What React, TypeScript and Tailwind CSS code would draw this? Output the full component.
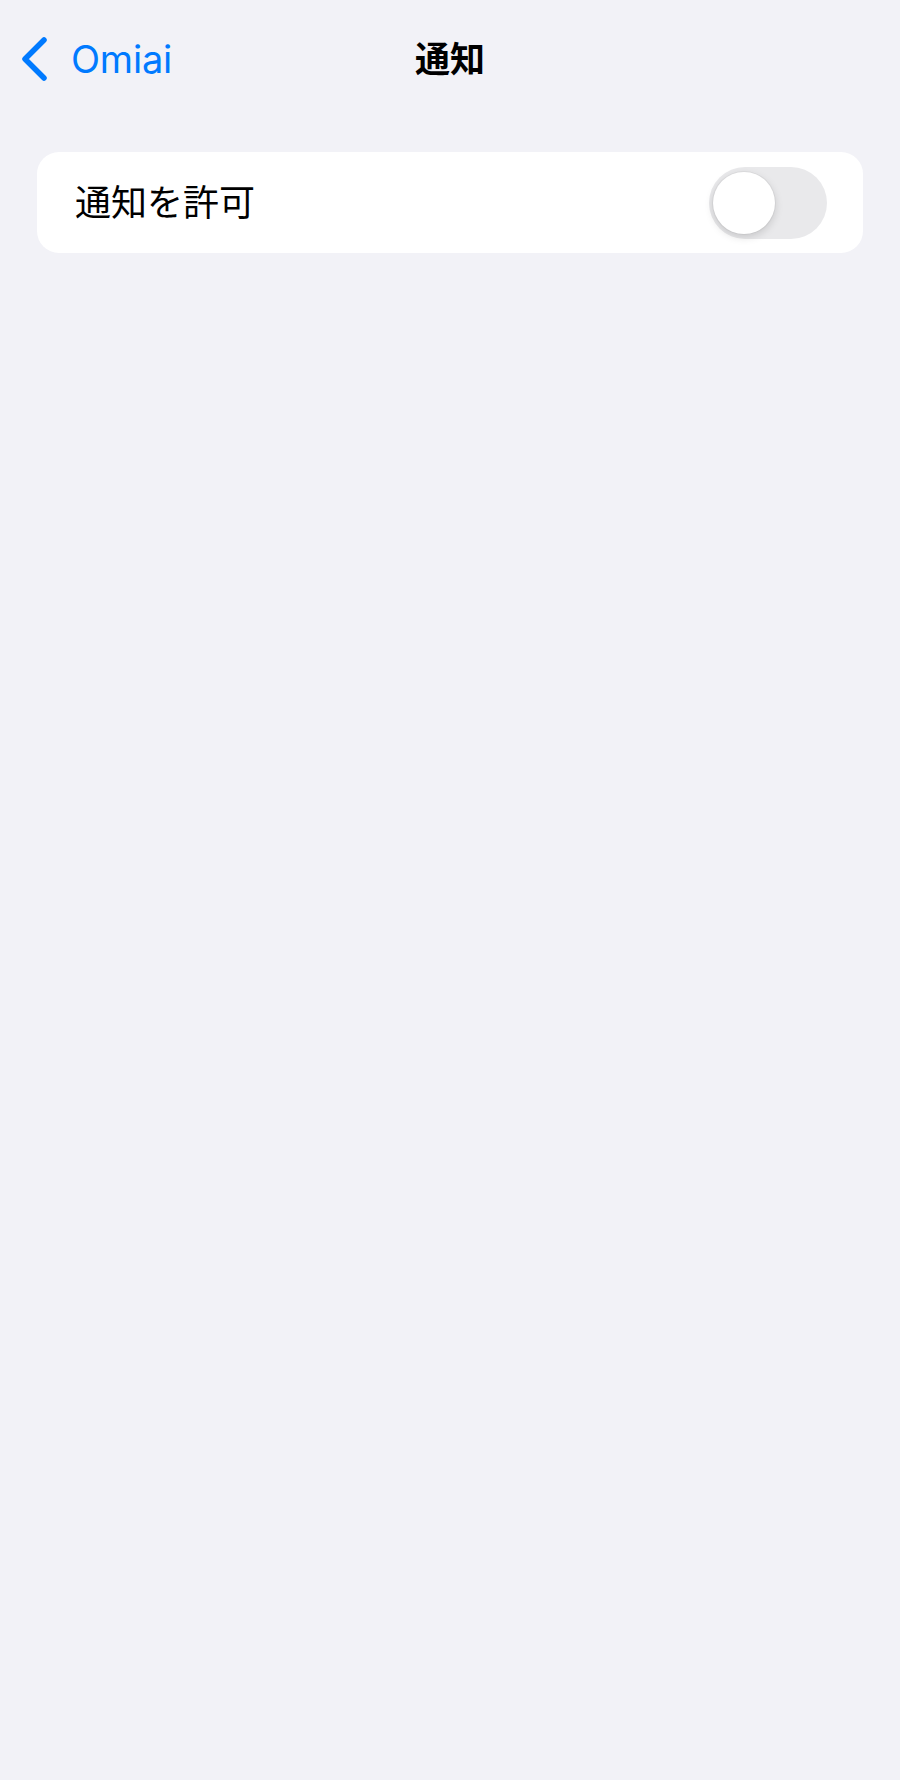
import { useState } from 'react'

function BackChevron() {
  return (
    <svg width="28" height="46" viewBox="0 0 28 46" fill="none">
      <path d="M24 4 L5 23 L24 42" stroke="#007aff" strokeWidth="5.5" strokeLinecap="round" strokeLinejoin="round" />
    </svg>
  )
}

function Toggle({ on, onChange }: { on: boolean; onChange: (v: boolean) => void }) {
  return (
    <button
      onClick={() => onChange(!on)}
      className={`relative w-[118px] h-[72px] rounded-full transition-colors ${on ? 'bg-[#34c759]' : 'bg-[#e9e9eb]'}`}
    >
      <span
        className={`absolute top-[5px] w-[62px] h-[62px] rounded-full bg-white shadow-[0_3px_8px_rgba(0,0,0,0.15),0_0_0_1px_rgba(0,0,0,0.04)] transition-all ${
          on ? 'left-[51px]' : 'left-[4px]'
        }`}
      />
    </button>
  )
}

export default function App() {
  const [allowed, setAllowed] = useState(false)

  return (
    <div
      className="w-[900px] min-h-[1780px] bg-[#f2f2f7]"
      style={{ fontFamily: 'Inter, "Noto Sans CJK JP", sans-serif' }}
    >
      <div className="relative h-[120px] flex items-center">
        <div className="flex items-center gap-[23px] pl-[20px] pb-[2px]">
          <BackChevron />
          <span className="text-[38px] leading-none text-[#007aff] tracking-[-0.2px]">Omiai</span>
        </div>
        <div className="absolute inset-x-0 top-0 h-[120px] flex items-center justify-center pointer-events-none">
          <span className="text-[35px] font-bold text-black leading-none pb-[2px]">通知</span>
        </div>
      </div>

      <div className="mx-[37px] mt-[32px] bg-white rounded-[22px] h-[101px] flex items-center justify-between pl-[38px] pr-[36px]">
        <span className="text-[36px] text-black leading-none">通知を許可</span>
        <Toggle on={allowed} onChange={setAllowed} />
      </div>
    </div>
  )
}
